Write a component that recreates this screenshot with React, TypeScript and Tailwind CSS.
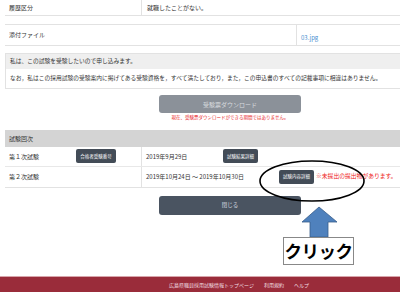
const jp = { fontFamily: '"Noto Sans CJK JP", "Noto Sans", sans-serif' };

function SmallButton({ label, className = "" }: { label: string; className?: string }) {
  return (
    <span
      className={`inline-flex h-[14px] items-center justify-center rounded-[2px] bg-[#434c57] px-[4px] text-[4.5px] text-white ${className}`}
    >
      {label}
    </span>
  );
}

export default function App() {
  return (
    <div className="relative h-[292px] w-[400px] overflow-hidden bg-white text-[#333]" style={jp}>
      <div className="ml-[5px] w-[410px]">
        {/* 履歴区分 */}
        <div className="flex h-[16px] border-b border-[#e2e2e2] text-[6px]">
          <div className="flex w-[137px] items-center border-r border-[#e2e2e2] pl-[4px]">履歴区分</div>
          <div className="flex items-center pl-[5px]">就職したことがない。</div>
        </div>

        {/* 添付ファイル */}
        <div className="mt-[8px] flex h-[22px] border-y border-[#e2e2e2] text-[6px]">
          <div className="w-[292px] border-r border-[#e2e2e2] pl-[4px] pt-[5px]">添付ファイル</div>
          <div className="flex items-end pb-[3px] pl-[4px] text-[#4a8fd0]">03.jpg</div>
        </div>

        {/* 申し込み */}
        <div className="mt-[7px] border border-[#e2e2e2] text-[5.75px]">
          <div className="flex h-[15px] items-center bg-[#efefef] pl-[4px]">私は、この試験を受験したいので申し込みます。</div>
          <div className="flex h-[19px] items-center pl-[4px]">
            なお，私はこの採用試験の受験案内に掲げてある受験資格を，すべて満たしており，また，この申込書のすべての記載事項に相違はありません。
          </div>
        </div>
      </div>

      {/* 受験票ダウンロード */}
      <div className="mt-[6px] flex flex-col items-center pl-[60px]">
        <div className="flex h-[18px] w-[142px] items-center justify-center rounded-[3px] bg-[#8b9199] text-[6px] text-[#d8dbdf]">
          受験票ダウンロード
        </div>
        <div className="mt-[1px] text-[4.5px] text-[#e8262a]">現在、受験票ダウンロードができる期間ではありません。</div>
      </div>

      {/* 試験回次 */}
      <div className="ml-[5px] mt-[9px] w-[410px] border-b border-[#e2e2e2] text-[6px]">
        <div className="flex h-[17px] items-center bg-[#d4d4d4] pl-[4px]">試験回次</div>
        <div className="flex h-[20px] border-b border-[#e8e8e8]">
          <div className="flex w-[137px] items-center border-r border-[#e2e2e2] pl-[4px]">
            <span className="w-[67px]">第１次試験</span>
            <SmallButton label="合格者受験番号" className="w-[40px]" />
          </div>
          <div className="flex items-center pl-[4px]">
            <span className="w-[77px]">2019年9月29日</span>
            <SmallButton label="試験結果詳細" className="w-[35px]" />
          </div>
        </div>
        <div className="flex h-[20px]">
          <div className="flex w-[137px] items-center border-r border-[#e2e2e2] pl-[4px]">第２次試験</div>
          <div className="flex items-center pl-[4px]">
            <span className="w-[133px]">2019年10月24日 ～ 2019年10月30日</span>
            <SmallButton label="試験内容詳細" className="w-[35px]" />
            <span className="ml-[2px] text-[5.8px] text-[#ee1c1c]">※未提出の提出物があります。</span>
          </div>
        </div>
      </div>

      {/* 閉じる */}
      <div className="mt-[8px] flex justify-center pl-[60px]">
        <div className="flex h-[19px] w-[142px] items-center justify-center rounded-[3px] bg-[#4a5461] text-[5.5px] text-[#d8dce0]">
          閉じる
        </div>
      </div>

      {/* 注釈 */}
      <svg className="absolute left-0 top-0" width="400" height="292" viewBox="0 0 400 292">
        <ellipse cx="312" cy="181" rx="52" ry="20" fill="none" stroke="#000" strokeWidth="1.6" />
        <polygon
          points="319,207 337,222 328,222 328,237 310,237 310,222 302,222"
          fill="#4f81bd"
          stroke="#385d8a"
          strokeWidth="0.8"
        />
      </svg>
      <div className="absolute left-[283px] top-[237px] flex h-[28px] w-[71px] items-center justify-center whitespace-nowrap border border-[#888] bg-white text-[17.5px] font-bold leading-none tracking-[-0.5px] text-black">
        クリック
      </div>

      {/* footer */}
      <div className="absolute bottom-0 left-0 flex h-[16px] w-[400px] items-center border-t border-[#d8a5ab] bg-[#9a2c3a] pl-[169px] text-[5px] text-[#f1dfe1]">
        <span>広島県職員採用試験情報トップページ</span>
        <span className="ml-[10px]">利用規約</span>
        <span className="ml-[10px]">ヘルプ</span>
      </div>
    </div>
  );
}
